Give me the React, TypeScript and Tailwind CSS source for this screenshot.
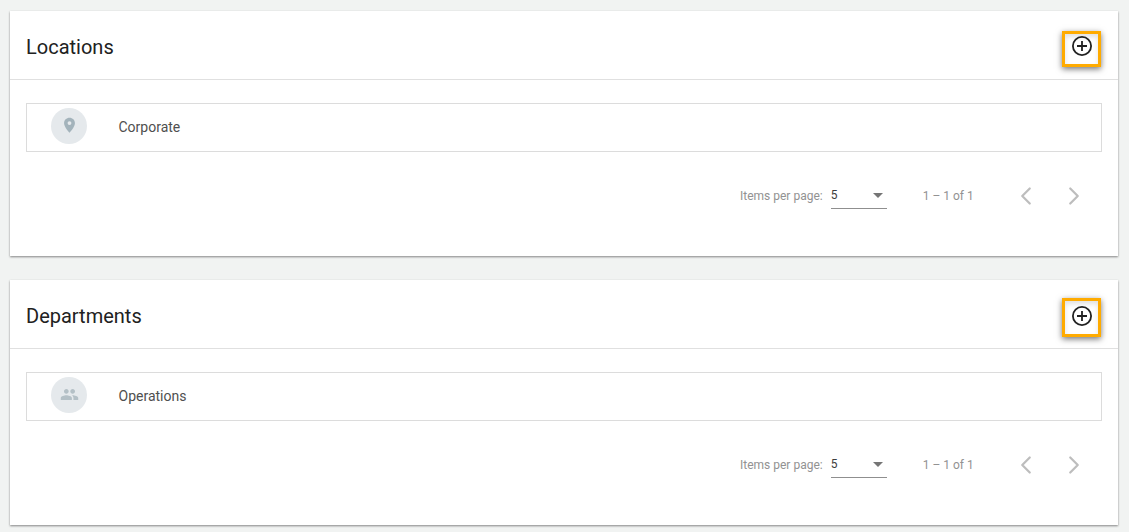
import React from 'react';
import { ChevronLeft, ChevronRight } from 'lucide-react';

const PinIcon = () => (
  <svg viewBox="0 0 24 24" className="w-[21px] h-[21px]" fill="#a3b3bb">
    <path d="M12 3.2c-3.5 0-6.2 2.7-6.2 6.1 0 4.3 6.2 10.9 6.2 10.9s6.2-6.6 6.2-10.9c0-3.4-2.7-6.1-6.2-6.1zm0 8.2a2.2 2.2 0 1 1 0-4.4 2.2 2.2 0 0 1 0 4.4z" />
  </svg>
);

const GroupIcon = () => (
  <svg viewBox="0 0 24 24" className="w-[19px] h-[19px]" fill="#b4c0c6">
    <path d="M16 11c1.66 0 2.99-1.34 2.99-3S17.66 5 16 5s-3 1.34-3 3 1.34 3 3 3zm-8 0c1.66 0 2.99-1.34 2.99-3S9.66 5 8 5 5 6.34 5 8s1.34 3 3 3zm0 2c-2.33 0-7 1.17-7 3.5V19h14v-2.5C15 14.17 10.33 13 8 13zm8 0c-.29 0-.62.02-.97.05 1.16.84 1.97 1.97 1.97 3.45V19h6v-2.5c0-2.33-4.67-3.5-7-3.5z" />
  </svg>
);

const AddCircleIcon = () => (
  <svg viewBox="0 0 24 24" className="w-[24px] h-[24px]" fill="none" stroke="#212121">
    <circle cx="12" cy="12" r="9.1" strokeWidth="1.8" />
    <path d="M12 7v10M7 12h10" strokeWidth="1.8" />
  </svg>
);

const SectionCard = ({ title, name, icon, addClass }: { title: string; name: string; icon: React.ReactNode; addClass: string }) => (
  <section className="mx-[10px] w-[1108px] h-[245px] bg-white shadow-[0_1px_2px_rgba(0,0,0,0.45)]">
    <div className="h-[69px] border-b border-[#e0e0e0] pl-[16px] pr-[17px] flex items-center justify-between">
      <h2 className="pt-[4px] text-[20px] leading-[24px] font-normal text-[#212121]">{title}</h2>
      <button className={`w-[39px] flex items-center justify-center border-[3px] border-[#ffab00] shadow-[0_2px_6px_rgba(0,0,0,0.55),inset_0_3px_5px_rgba(0,0,0,0.12)] ${addClass}`}>
        <AddCircleIcon />
      </button>
    </div>
    <div className="px-[16px] pt-[23px]">
      <div className="h-[49px] border border-[#dcdcdc] flex items-center pl-[24px]">
        <div className="mb-[4px] w-[36px] h-[36px] rounded-full bg-[#e5e9ec] flex items-center justify-center">{icon}</div>
        <span className="ml-[31.5px] text-[14px] text-[#4f4f4f]">{name}</span>
      </div>
      <div className="mt-[20px] h-[48px] flex items-center text-[12px] text-[#929292]">
        <span className="ml-[714px]">Items per page:</span>
        <div className="ml-[8px] w-[56px] h-[26px] mt-[-1px] border-b border-[#8f8f8f] flex items-center justify-between text-[#3d3d3d]">
          <span>5</span>
          <span className="mr-[4px] w-0 h-0 border-x-[5px] border-x-transparent border-t-[5px] border-t-[#757575]" />
        </div>
        <span className="ml-[36px]">1 – 1 of 1</span>
        <ChevronLeft className="ml-[37px] text-[#bdbdbd]" size={30} strokeWidth={1.8} />
        <ChevronRight className="ml-[18px] text-[#bdbdbd]" size={30} strokeWidth={1.8} />
      </div>
    </div>
  </section>
);

export default function App() {
  return (
    <div className="w-[1129px] h-[532px] overflow-hidden bg-[#f1f3f2] pt-[11px] flex flex-col gap-[24px] font-['Roboto',sans-serif]">
      <SectionCard title="Locations" name="Corporate" icon={<PinIcon />} addClass="h-[36px] mt-[8px] pb-[6px]" />
      <SectionCard title="Departments" name="Operations" icon={<GroupIcon />} addClass="h-[39px] mt-[7px] pb-[3px]" />
    </div>
  );
}
